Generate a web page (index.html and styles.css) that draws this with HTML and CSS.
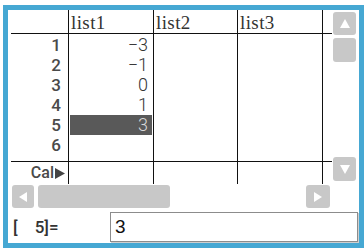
FILE: index.html
```html
<!DOCTYPE html>
<html>
<head>
<meta charset="utf-8">
<link rel="stylesheet" href="styles.css">
</head>
<body>
<div class="frame">
  <div class="top">
    <div class="sheet">
      <div class="hc lab"></div>
      <div class="hc col">list1</div>
      <div class="hc col">list2</div>
      <div class="hc col">list3</div>
      <div class="hc col"></div>
      <div class="hline"></div>
      <div class="bc labs">
        <div class="r">1</div><div class="r">2</div><div class="r">3</div>
        <div class="r">4</div><div class="r">5</div><div class="r">6</div>
      </div>
      <div class="bc col vals">
        <div class="r">−3</div><div class="r">−1</div><div class="r">0</div>
        <div class="r">1</div><div class="r sel">3</div><div class="r"></div>
      </div>
      <div class="bc col"></div>
      <div class="bc col"></div>
      <div class="bc col"></div>
      <div class="hline"></div>
      <div class="cc cal">Cal<svg class="calarrow" width="10" height="11" viewBox="0 0 10 11"><path d="M0 0 L10 5.5 L0 11 Z" fill="#444"/></svg></div>
      <div class="cc col"></div>
      <div class="cc col"></div>
      <div class="cc col"></div>
      <div class="cc col"></div>
    </div>
    <div class="vbar">
      <div class="btn up"><svg width="10" height="9" viewBox="0 0 10 9"><path d="M5 0 L10 9 L0 9 Z" fill="#fff"/></svg></div>
      <div class="thumb vthumb"></div>
      <div class="btn down"><svg width="10" height="9" viewBox="0 0 10 9"><path d="M0 0 L10 0 L5 9 Z" fill="#fff"/></svg></div>
    </div>
  </div>
  <div class="hbar">
    <div class="btn hbtn"><svg width="8" height="10" viewBox="0 0 8 10"><path d="M8 0 L8 10 L0 5 Z" fill="#fff"/></svg></div>
    <div class="thumb hthumb"></div>
    <div class="btn hbtn right"><svg width="8" height="10" viewBox="0 0 8 10"><path d="M0 0 L8 5 L0 10 Z" fill="#fff"/></svg></div>
  </div>
  <div class="inrow">
    <div class="ilabel"><span>[</span><span class="inum">5]=</span></div>
    <div class="ibox">3</div>
  </div>
</div>
</body>
</html>
```
FILE: styles.css
```css
html, body {
  margin: 0;
  padding: 0;
  background: #fff;
  overflow: hidden;
}
.frame {
  margin: 5px 0 0 3px;
  width: 351px;
  height: 233px;
  border: 5px solid #46a8d3;
  background: #fff;
}
.top {
  display: flex;
  height: 174px;
}
.sheet {
  width: 324px;
  display: grid;
  grid-template-columns: 60px 85px 84px 85px 10px;
  grid-template-rows: 23px 1px 127px 1px 22px;
}
.col {
  border-left: 1px solid #111;
  box-sizing: border-box;
}
.hc {
  font-family: "Liberation Serif", "DejaVu Serif", serif;
  font-size: 19px;
  letter-spacing: 0.4px;
  color: #333;
  line-height: 23px;
  padding-left: 2px;
  padding-top: 1px;
  box-sizing: border-box;
}
.hline {
  grid-column: 1 / -1;
  background: #111;
  margin-left: 3px;
}
.bc {
  padding-top: 1px;
  box-sizing: border-box;
}
.r {
  height: 20px;
  line-height: 20px;
  text-align: right;
}
.labs .r {
  font-family: Roboto, "DejaVu Sans", sans-serif;
  font-weight: 500;
  font-size: 17px;
  color: #4a4a4a;
  padding-right: 7px;
}
.vals .r {
  font-family: Roboto, "DejaVu Sans", sans-serif;
  font-weight: 300;
  font-size: 18px;
  color: #333;
  padding-right: 4px;
  margin-left: 1px;
  margin-right: 1px;
}
.vals .sel {
  background: #595959;
  color: #d8d8d8;
}
.cc {
  box-sizing: border-box;
}
.cal {
  font-family: Roboto, "DejaVu Sans", sans-serif;
  font-weight: 500;
  font-size: 16px;
  color: #4a4a4a;
  padding-right: 3px;
  line-height: 22px;
  display: flex;
  justify-content: flex-end;
  align-items: center;
}
.calarrow {
  margin-left: 1px;
}
.vbar {
  width: 27px;
  display: flex;
  flex-direction: column;
  padding: 2px 3px 3px 1px;
  box-sizing: border-box;
}
.btn {
  background: #c8c8c8;
  border-radius: 3px;
  display: flex;
  align-items: center;
  justify-content: center;
}
.up {
  height: 23px;
}
.thumb {
  background: #c8c8c8;
  border-radius: 3px;
}
.vthumb {
  height: 24px;
  margin-top: 3px;
}
.down {
  height: 24px;
  margin-top: auto;
}
.hbar {
  display: flex;
  height: 24px;
  padding-top: 1px;
  box-sizing: border-box;
}
.hbtn {
  width: 22px;
  height: 23px;
  margin-left: 4px;
}
.hbtn.right {
  width: 24px;
  margin-left: 136px;
}
.hthumb {
  width: 132px;
  height: 23px;
  margin-left: 4px;
}
.inrow {
  display: flex;
  padding-top: 4px;
}
.ilabel {
  width: 102px;
  padding-left: 5px;
  box-sizing: border-box;
  font-family: Roboto, "DejaVu Sans", sans-serif;
  font-weight: 500;
  font-size: 17px;
  color: #333;
  line-height: 30px;
}
.inum {
  margin-left: 17px;
}
.ibox {
  width: 248px;
  height: 30px;
  box-sizing: border-box;
  border: 1px solid #8c8c8c;
  box-shadow: 1px 1px 0 #cfcfcf;
  font-family: "Liberation Sans", Arial, sans-serif;
  font-size: 19px;
  color: #111;
  line-height: 28px;
  padding-left: 4px;
}
```
